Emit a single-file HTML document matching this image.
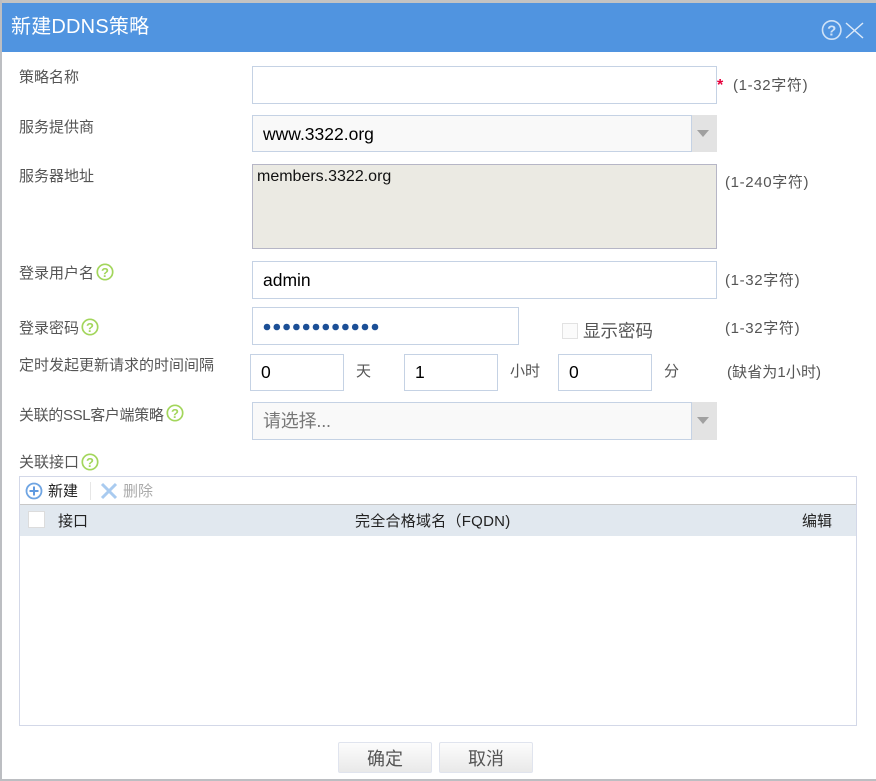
<!DOCTYPE html>
<html><head><meta charset="utf-8">
<style>
html,body{margin:0;padding:0;background:#fff}
#p{position:relative;width:876px;height:781px;overflow:hidden;background:#fff;font-family:"Liberation Sans","Noto Sans CJK SC",sans-serif;color:#555}
#p div,#p span.t,#p svg{position:absolute}
.t{position:absolute;white-space:nowrap;line-height:20px}
.l{font-size:15px;color:#555;left:19px}
.n{font-size:15px;color:#555}
.h{font-size:15px;color:#555;letter-spacing:.65px}
.b{box-sizing:border-box;border:1px solid #c5d2e4;background:#fff}
.v{font-size:17.5px;color:#000}
</style></head><body>
<div id="p">
<div style="left:0;top:0;width:876px;height:3px;background:#c3c3c3"></div>
<div style="left:0;top:0;width:2px;height:781px;background:#bcbec2"></div>
<div style="left:0;top:779px;width:876px;height:2px;background:#bcbec2"></div>
<div style="left:2px;top:3px;width:874px;height:49px;background:#5094e0"></div>
<span class="t" style="left:11px;top:16px;font-size:20px;color:#fff;line-height:22px;letter-spacing:.2px">新建DDNS策略</span>
<svg style="left:820px;top:18px" width="46" height="24" viewBox="0 0 46 24" fill="none"><circle cx="11.7" cy="12" r="9.2" stroke="#cfe2f7" stroke-width="1.6"/><text x="11.7" y="17.5" text-anchor="middle" font-family="Liberation Sans" font-weight="bold" font-size="15" fill="#cfe2f7">?</text><path d="M26 5L43 20M43 5L26 20" stroke="#dbe9f9" stroke-width="1.5"/></svg>

<span class="t l" style="top:68px">策略名称</span>
<div class="b" style="left:252px;top:66px;width:465px;height:38px"></div>
<span class="t" style="left:717px;top:76px;color:#e6003c;font-size:16px;font-weight:bold">*</span>
<span class="t h" style="left:733px;top:76px">(1-32字符)</span>

<span class="t l" style="top:118px">服务提供商</span>
<div class="b" style="left:252px;top:115px;width:440px;height:37px;background:#f9f9f9"></div>
<div style="left:692px;top:115px;width:25px;height:37px;background:#e3e3e3"></div>
<div style="left:697px;top:130px;width:0;height:0;border-left:6.5px solid transparent;border-right:6.5px solid transparent;border-top:7px solid #a0a0a0"></div>
<span class="t v" style="left:263px;top:124px">www.3322.org</span>

<span class="t l" style="top:167px">服务器地址</span>
<div class="b" style="left:252px;top:164px;width:465px;height:85px;background:#ebeae3;border-color:#b6b6c6"></div>
<span class="t" style="left:257px;top:167px;font-size:16px;color:#111">members.3322.org</span>
<span class="t h" style="left:725px;top:173px">(1-240字符)</span>

<span class="t l" style="top:264px">登录用户名</span>
<svg style="left:96px;top:263px" width="19" height="19"><circle cx="9" cy="9" r="7.7" fill="#fff" stroke="#a3d65c" stroke-width="1.7"/><text x="9" y="14" text-anchor="middle" font-family="Liberation Sans" font-weight="bold" font-size="13" fill="#a3d65c">?</text></svg>
<div class="b" style="left:252px;top:261px;width:465px;height:38px"></div>
<span class="t v" style="left:263px;top:270px">admin</span>
<span class="t h" style="left:725px;top:271px">(1-32字符)</span>

<span class="t l" style="top:319px">登录密码</span>
<svg style="left:81px;top:318px" width="19" height="19"><circle cx="9" cy="9" r="7.7" fill="#fff" stroke="#a3d65c" stroke-width="1.7"/><text x="9" y="14" text-anchor="middle" font-family="Liberation Sans" font-weight="bold" font-size="13" fill="#a3d65c">?</text></svg>
<div class="b" style="left:252px;top:307px;width:267px;height:38px"></div>
<svg style="left:263px;top:321px" width="120" height="12" fill="#1c4f96"><circle cx="4" cy="6" r="3.3"/><circle cx="13.8" cy="6" r="3.3"/><circle cx="23.6" cy="6" r="3.3"/><circle cx="33.4" cy="6" r="3.3"/><circle cx="43.2" cy="6" r="3.3"/><circle cx="53" cy="6" r="3.3"/><circle cx="62.8" cy="6" r="3.3"/><circle cx="72.6" cy="6" r="3.3"/><circle cx="82.4" cy="6" r="3.3"/><circle cx="92.2" cy="6" r="3.3"/><circle cx="102" cy="6" r="3.3"/><circle cx="112" cy="6" r="3.3"/></svg>
<div style="left:562px;top:323px;width:16px;height:16px;box-sizing:border-box;border:1px solid #e2e2e2;background:#fbfbfb"></div>
<span class="t" style="left:583px;top:321px;font-size:17.5px;color:#555">显示密码</span>
<span class="t h" style="left:725px;top:319px">(1-32字符)</span>

<span class="t l" style="top:356px">定时发起更新请求的时间间隔</span>
<div class="b" style="left:250px;top:354px;width:94px;height:37px"></div>
<span class="t v" style="left:261px;top:362px">0</span>
<span class="t n" style="left:356px;top:362px">天</span>
<div class="b" style="left:404px;top:354px;width:94px;height:37px"></div>
<span class="t v" style="left:415px;top:362px">1</span>
<span class="t n" style="left:510px;top:362px">小时</span>
<div class="b" style="left:558px;top:354px;width:94px;height:37px"></div>
<span class="t v" style="left:569px;top:362px">0</span>
<span class="t n" style="left:664px;top:362px">分</span>
<span class="t h" style="left:727px;top:363px;letter-spacing:.1px">(缺省为1小时)</span>

<span class="t l" style="top:406px;letter-spacing:-.35px">关联的SSL客户端策略</span>
<svg style="left:166px;top:404px" width="19" height="19"><circle cx="9" cy="9" r="7.7" fill="#fff" stroke="#a3d65c" stroke-width="1.7"/><text x="9" y="14" text-anchor="middle" font-family="Liberation Sans" font-weight="bold" font-size="13" fill="#a3d65c">?</text></svg>
<div class="b" style="left:252px;top:402px;width:440px;height:38px;background:#f9f9f9"></div>
<div style="left:692px;top:402px;width:25px;height:38px;background:#e3e3e3"></div>
<div style="left:697px;top:417px;width:0;height:0;border-left:6.5px solid transparent;border-right:6.5px solid transparent;border-top:7px solid #a0a0a0"></div>
<span class="t" style="left:263px;top:411px;font-size:18px;color:#777;letter-spacing:-.2px">请选择...</span>

<span class="t l" style="top:453px">关联接口</span>
<svg style="left:81px;top:453px" width="19" height="19"><circle cx="9" cy="9" r="7.7" fill="#fff" stroke="#a3d65c" stroke-width="1.7"/><text x="9" y="14" text-anchor="middle" font-family="Liberation Sans" font-weight="bold" font-size="13" fill="#a3d65c">?</text></svg>

<div style="left:19px;top:476px;width:838px;height:250px;box-sizing:border-box;border:1px solid #d3d8e8;background:#fff"></div>
<svg style="left:25px;top:482px" width="18" height="18" fill="none"><circle cx="9" cy="9" r="7.5" stroke="#6fa5e3" stroke-width="1.8"/><path d="M4.5 9H13.5M9 4.5V13.5" stroke="#5f9ae0" stroke-width="2"/></svg>
<span class="t" style="left:48px;top:482px;font-size:15px;color:#222">新建</span>
<div style="left:90px;top:482px;width:1px;height:18px;background:#e6e6e6"></div>
<svg style="left:100px;top:482px" width="18" height="18" fill="none"><path d="M2 2L16 16M16 2L2 16" stroke="#a9cbf0" stroke-width="3"/></svg>
<span class="t" style="left:123px;top:482px;font-size:15px;color:#aaa">删除</span>
<div style="left:20px;top:504px;width:836px;height:32px;background:#e1e8ef;border-top:1px solid #c8c8c8;box-sizing:border-box"></div>
<div style="left:28px;top:511px;width:17px;height:17px;box-sizing:border-box;border:1px solid #dcdcdc;background:#fff"></div>
<span class="t" style="left:58px;top:512px;font-size:15px;color:#222">接口</span>
<span class="t" style="left:355px;top:512px;font-size:15px;color:#222;letter-spacing:.25px">完全合格域名（FQDN)</span>
<span class="t" style="left:802px;top:512px;font-size:15px;color:#222">编辑</span>

<div style="left:338px;top:742px;width:94px;height:31px;box-sizing:border-box;border:1px solid #e0e4ee;border-radius:2px;background:linear-gradient(#fcfcfc,#e9e9e9)"></div>
<span class="t" style="left:367px;top:749px;font-size:18px;color:#555">确定</span>
<div style="left:439px;top:742px;width:94px;height:31px;box-sizing:border-box;border:1px solid #e0e4ee;border-radius:2px;background:linear-gradient(#fcfcfc,#e9e9e9)"></div>
<span class="t" style="left:468px;top:749px;font-size:18px;color:#555">取消</span>
</div>
</body></html>
